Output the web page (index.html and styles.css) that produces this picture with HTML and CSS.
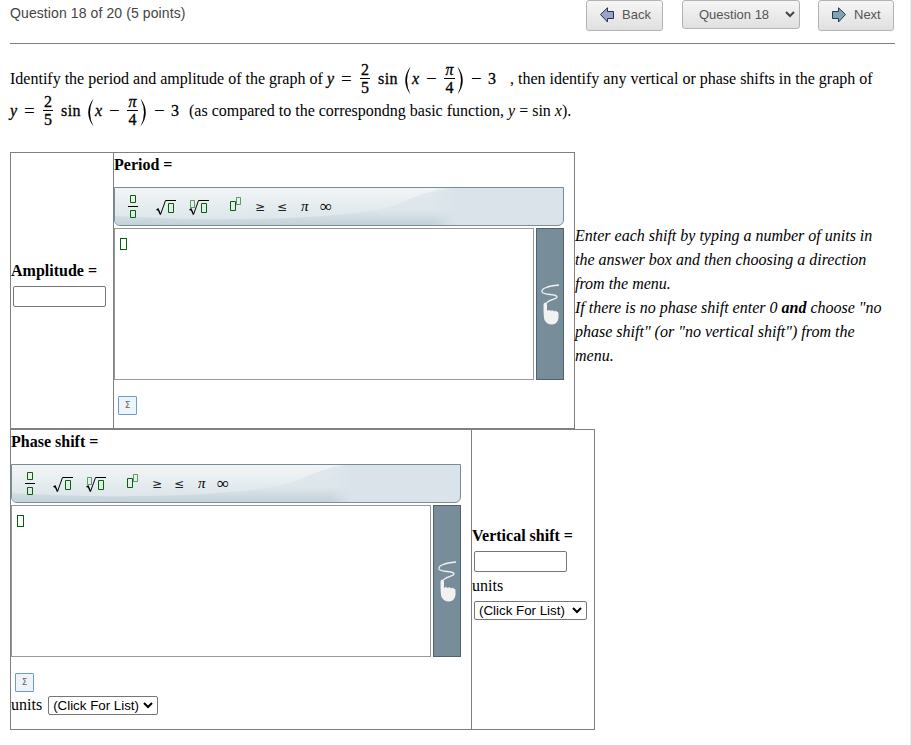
FILE: index.html
```
<!DOCTYPE html>
<html lang="en">
<head>
    <meta charset="UTF-8">
    <title>Question 18</title>
    <link rel="stylesheet" href="styles.css">
</head>
<body>
    <!-- shared drawings -->
    <svg class="defs" width="0" height="0">
        <defs>
            <linearGradient id="shade" x1="0" y1="0" x2="0" y2="1">
                <stop offset="0" stop-color="#e2e9ee"/>
                <stop offset="0.6" stop-color="#dde6eb"/>
                <stop offset="1" stop-color="#c3d1d9"/>
            </linearGradient>
            <linearGradient id="gloss" x1="0" y1="0" x2="0" y2="1">
                <stop offset="0" stop-color="#f2f5f6"/>
                <stop offset="1" stop-color="#dde6eb"/>
            </linearGradient>
            <linearGradient id="fade" x1="0" y1="0" x2="1" y2="0">
                <stop offset="0" stop-color="#dae3ea" stop-opacity="0"/>
                <stop offset="1" stop-color="#dae3ea"/>
            </linearGradient>
            <symbol id="tools" viewBox="0 0 448 37">
                <rect width="340" height="37" fill="url(#shade)"/>
                <path d="M0 0H340C308 2 292 14 275 19Q240 27 175 30Q80 33 0 28Z" fill="url(#gloss)"/>
                <rect x="318" width="22" height="37" fill="url(#fade)"/>
                <g fill="none" stroke="#006400">
                    <path d="M15.500 7.500h5v7h-5zM15.500 22.500h5v7h-5zM53.500 15.500h5v9h-5zM86.500 15.500h5v9h-5zM115.500 13.500h5v9h-5z"/>
                    <path d="M75.500 12.500h4v7h-4zM121.500 9.500h4v7h-4z" opacity="0.6"/>
                </g>
                <g fill="none" stroke="#000">
                    <path d="M13 18.500h10M45.500 26.500L50.500 12.500H61M78.500 26.500L83.500 12.500H94"/>
                    <path d="M41.500 22L43 21L45.500 26.500M74.500 22L76 21L78.500 26.500" stroke-width="1.500"/>
                </g>
                <g>
                    <text class="rel" x="140" y="23">≥</text>
                    <text class="rel" x="162" y="23">≤</text>
                    <text class="sym" x="186" y="23">π</text>
                    <text class="inf" x="205" y="24">∞</text>
                </g>
            </symbol>
            <symbol id="hand" viewBox="0 0 28 150">
                <path d="M22 56C10 57 4 60 5 63C7 67 20 64 20 68C20 71 9 70 8 77" fill="none" stroke="#f2f2f2" stroke-width="1.300"/>
                <path d="M6.500 76Q6.500 73.500 8 73.500T10 76V82Q12 80 13.500 82Q15.500 80.500 17 82.500Q19 81 20 83Q21.500 82 21.500 85V89Q20.500 95 15 95.500Q10 95.500 7.500 91Q6.500 89 6.500 76Z" fill="#f2f2f2"/>
            </symbol>
        </defs>
    </svg>

    <div class="page">
        <div class="header">
            <span class="counter">Question 18 of 20 (5 points)</span>
            <button class="nav-btn back">
                <svg width="16" height="16" viewBox="0 0 16 16"><path d="M1.500 7.500L8.500 .8V4.500H14.500V11.500H8.500V15Z" fill="#98a5c6" stroke="#25304f"/></svg>
                <span>Back</span>
            </button>
            <button class="nav-btn picker">
                <span>Question 18</span>
                <svg width="10" height="7" viewBox="0 0 10 7"><path d="M1 1L5 5L9 1" fill="none" stroke="#444" stroke-width="2"/></svg>
            </button>
            <button class="nav-btn next">
                <svg width="16" height="16" viewBox="0 0 16 16"><path d="M14.500 7.500L7.500 .8V4.500H1.500V11.500H7.500V15Z" fill="#82a3b2" stroke="#1f3d4c"/></svg>
                <span>Next</span>
            </button>
        </div>

        <div class="question">
            <div class="line">
                <span class="lead">Identify the period and amplitude of the graph of</span>
                <span class="math">
                    <i class="y">y</i><span class="eq">=</span>
                    <span class="frac"><span>2</span><span>5</span></span>
                    <span class="sin">sin</span>
                    <svg class="paren" width="7" height="29" viewBox="0 0 7 29"><path d="M6.500 .5Q-4 14.500 6.500 28.500Q-.5 14.500 6.500 .5Z"/></svg>
                    <i class="x">x</i><span class="minus">−</span>
                    <span class="frac pi"><i>π</i><span>4</span></span>
                    <svg class="paren close" width="7" height="29" viewBox="0 0 7 29"><path d="M.5 .5Q11 14.500 .5 28.500Q7.500 14.500 .5 .5Z"/></svg>
                    <span class="minus last">−</span><span class="three">3</span>
                </span>
                <span>, then identify any vertical or phase shifts in the graph of</span>
            </div>
            <div class="line">
                <span class="math">
                    <i class="y">y</i><span class="eq">=</span>
                    <span class="frac"><span>2</span><span>5</span></span>
                    <span class="sin">sin</span>
                    <svg class="paren" width="7" height="29" viewBox="0 0 7 29"><path d="M6.500 .5Q-4 14.500 6.500 28.500Q-.5 14.500 6.500 .5Z"/></svg>
                    <i class="x">x</i><span class="minus">−</span>
                    <span class="frac pi"><i>π</i><span>4</span></span>
                    <svg class="paren close" width="7" height="29" viewBox="0 0 7 29"><path d="M.5 .5Q11 14.500 .5 28.500Q7.500 14.500 .5 .5Z"/></svg>
                    <span class="minus last">−</span><span class="three">3</span>
                </span>
                <span>(as compared to the correspondng basic function, <i>y</i> = sin <i>x</i>).</span>
            </div>
        </div>

        <div class="top-row">
            <div class="grid first">
                <div class="cell side">
                    <b class="label">Amplitude =</b>
                    <input class="answer" type="text">
                </div>
                <div class="cell">
                    <b class="label title">Period =</b>
                    <div class="toolbar"><svg width="448" height="37"><use href="#tools"/></svg></div>
                    <div class="editor">
                        <div class="canvas"><span class="slot"></span></div>
                        <div class="draw"><svg width="26" height="150" viewBox="0 0 26 150"><use href="#hand" width="28" height="150"/></svg></div>
                    </div>
                    <button class="sigma">Σ</button>
                </div>
            </div>
            <div class="help">
                Enter each shift by typing a number of units in<br>
                the answer box and then choosing a direction<br>
                from the menu.<br>
                If there is no phase shift enter 0 <b>and</b> choose "no<br>
                phase shift" (or "no vertical shift") from the<br>
                menu.
            </div>
        </div>

        <div class="grid second">
            <div class="cell">
                <b class="label title">Phase shift =</b>
                <div class="toolbar"><svg width="448" height="37"><use href="#tools"/></svg></div>
                <div class="editor">
                    <div class="canvas"><span class="slot"></span></div>
                    <div class="draw"><svg width="26" height="150" viewBox="0 0 26 150"><use href="#hand" width="28" height="150"/></svg></div>
                </div>
                <button class="sigma">Σ</button>
                <div class="units-row">
                    <span class="units">units</span>
                    <div class="list short"><span>(Click For List)</span><svg width="10" height="7" viewBox="0 0 10 7"><path d="M1 1L5 5L9 1" fill="none" stroke="#000" stroke-width="2"/></svg></div>
                </div>
            </div>
            <div class="cell side vertical">
                <b class="label">Vertical shift =</b>
                <input class="answer" type="text">
                <span class="units">units</span>
                <div class="list"><span>(Click For List)</span><svg width="10" height="7" viewBox="0 0 10 7"><path d="M1 1L5 5L9 1" fill="none" stroke="#000" stroke-width="2"/></svg></div>
            </div>
        </div>
    </div>
</body>
</html>
```
FILE: styles.css
```
* {
    box-sizing: border-box;
}
body {
    margin: 0;
    background: #fff;
    font-family: "Liberation Serif", serif;
    font-size: 16px;
    color: #000;
}
.defs {
    display: block;
}
.page {
    width: 911px;
    height: 745px;
    padding: 0 15px 0 10px;
    border-right: 1px solid #eee;
    overflow: hidden;
}

/* header */
.header {
    display: flex;
    align-items: flex-start;
    height: 44px;
    border-bottom: 1px solid #808080;
    font-family: "Liberation Sans", sans-serif;
    font-size: 14px;
    color: #444;
}
.counter {
    flex: 1;
    line-height: 16px;
    padding-top: 5px;
    letter-spacing: 0.1px;
}
.nav-btn {
    display: flex;
    align-items: center;
    height: 31px;
    padding: 0 0 2px;
    border: 1px solid #b3b3b3;
    border-radius: 3px;
    background: linear-gradient(#f6f6f6, #e0e0e0);
    font: 13px "Liberation Sans", sans-serif;
    color: #555;
}
.back {
    width: 77px;
    padding-left: 12px;
    gap: 7px;
}
.picker {
    width: 118px;
    height: 29px;
    margin: 0 18px 0 19px;
    padding: 0 4px 0 16px;
    justify-content: space-between;
}
.next {
    width: 76px;
    padding-left: 12px;
    gap: 7px;
    margin-right: 1px;
}

/* question text */
.question {
    padding-top: 19px;
    height: 108px;
}
.line {
    display: flex;
    align-items: center;
    height: 32px;
    white-space: nowrap;
}
.lead {
    width: 317px;
}
.math {
    display: flex;
    align-items: center;
    width: 179px;
    -webkit-text-stroke: 0.3px #000;
}
.lead + .math {
    width: 183px;
}
.y {
    width: 14px;
}
.eq {
    width: 19px;
    font-size: 19px;
    -webkit-text-stroke: 0;
}
.frac {
    display: flex;
    flex-direction: column;
    width: 10px;
}
.frac > * {
    height: 18px;
    line-height: 18px;
    text-align: center;
}
.frac > :first-child {
    height: 17px;
    line-height: 16px;
    border-bottom: 1px solid #000;
}
.sin {
    width: 34px;
    padding-left: 8px;
    letter-spacing: 0.4px;
}
.paren {
    flex: none;
    margin-top: 2px;
}
.x {
    width: 15px;
    padding-left: 1px;
}
.minus {
    width: 18px;
    font-size: 19px;
    -webkit-text-stroke: 0;
}
.pi {
    width: 11px;
}
.close {
    margin-left: 2px;
}
.last {
    margin-left: 7px;
    width: 17px;
}

/* answer tables */
.top-row {
    display: flex;
}
.grid {
    display: grid;
    flex: none;
    border: 1px solid #808080;
}
.first {
    grid-template-columns: 102px 461px;
    width: 565px;
    height: 277px;
}
.second {
    grid-template-columns: 460px 123px;
    width: 585px;
    height: 301px;
}
.cell + .cell {
    border-left: 1px solid #808080;
}
.side {
    display: flex;
    flex-direction: column;
    justify-content: center;
    align-items: flex-start;
    padding-bottom: 13px;
}
.label {
    line-height: 24px;
    white-space: nowrap;
}
.title {
    display: block;
    height: 34px;
}
.answer {
    width: 93px;
    height: 21px;
    margin: 3px 2px 2px;
    border: 1px solid #767676;
    border-radius: 2px;
}
.toolbar {
    width: 450px;
    height: 39px;
    border: 1px solid #778e9a;
    border-radius: 0 0 6px 6px;
    background: #dae3ea;
    overflow: hidden;
}
.toolbar svg, .draw svg {
    display: block;
}
.rel {
    font: 12px "DejaVu Sans", sans-serif;
    fill: #222;
}
.sym {
    font: italic 15px "Liberation Serif", serif;
}
.inf {
    font: 17px "Liberation Serif", serif;
}
.editor {
    display: flex;
    justify-content: space-between;
    width: 450px;
    height: 152px;
    margin-top: 2px;
}
.canvas {
    width: 420px;
    padding: 9px 5px;
    border: 1px solid #999;
}
.slot {
    display: block;
    width: 7px;
    height: 12px;
    border: 1px solid #006400;
}
.draw {
    width: 28px;
    border: 1px solid #4d626e;
    background: #778e9a;
}
.sigma {
    display: block;
    width: 19px;
    height: 19px;
    margin: 16px 0 0 4px;
    padding: 0;
    border: 1px solid #6b9bd1;
    border-radius: 1px;
    background: #edf4fa;
    font: 9px/17px "DejaVu Sans", sans-serif;
    color: #666;
}
.units-row {
    display: flex;
    align-items: center;
    height: 20px;
    margin-top: 3px;
}
.units {
    line-height: 24px;
}
.list {
    display: flex;
    align-items: center;
    justify-content: space-between;
    width: 113px;
    height: 19px;
    margin: 2px;
    padding: 0 4px;
    border: 1px solid #767676;
    border-radius: 2px;
    font: 13.333px "Liberation Sans", sans-serif;
    white-space: nowrap;
}
.short {
    width: 110px;
    margin: 0 0 0 6px;
}
.vertical {
    padding-bottom: 14px;
}
.vertical .list {
    margin-top: 3px;
}
.help {
    padding-top: 72px;
    font-style: italic;
    line-height: 24px;
    white-space: nowrap;
}
```
